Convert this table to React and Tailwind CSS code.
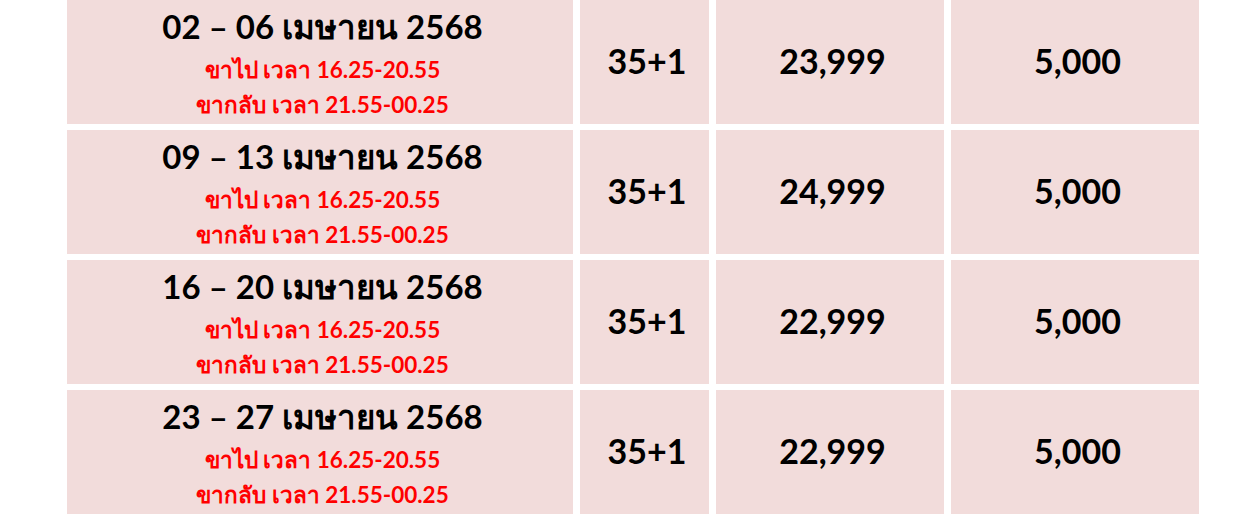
const rows = [
  { date: "02 – 06 เมษายน 2568", seats: "35+1", price: "23,999", deposit: "5,000" },
  { date: "09 – 13 เมษายน 2568", seats: "35+1", price: "24,999", deposit: "5,000" },
  { date: "16 – 20 เมษายน 2568", seats: "35+1", price: "22,999", deposit: "5,000" },
  { date: "23 – 27 เมษายน 2568", seats: "35+1", price: "22,999", deposit: "5,000" },
];

export default function App() {
  return (
    <div className="w-[1258px] h-[517px] overflow-hidden bg-white font-['Lato','Noto_Sans',sans-serif] font-bold">
      <div className="ml-[67px] flex flex-col gap-[6px]">
        {rows.map((r, i) => (
          <div key={i} className="flex gap-[7px] h-[124px]">
            <div className="w-[506px] bg-[#f2dcdb] flex flex-col items-center pt-[5px] pl-[5px]">
              <div className="text-[33px] leading-[42px] text-black">{r.date}</div>
              <div className="mt-[5px] text-[22.5px] leading-[35px] text-[#ff0000]">ขาไป เวลา 16.25-20.55</div>
              <div className="text-[22.5px] leading-[35px] text-[#ff0000]">ขากลับ เวลา 21.55-00.25</div>
            </div>
            <div className="w-[129px] bg-[#f2dcdb] flex items-center justify-center pl-[5px] pb-[4px] text-[34px] text-black">
              {r.seats}
            </div>
            <div className="w-[228px] bg-[#f2dcdb] flex items-center justify-center pl-[5px] pb-[4px] text-[34px] text-black">
              {r.price}
            </div>
            <div className="w-[248px] bg-[#f2dcdb] flex items-center justify-center pl-[5px] pb-[4px] text-[34px] text-black">
              {r.deposit}
            </div>
          </div>
        ))}
      </div>
    </div>
  );
}
